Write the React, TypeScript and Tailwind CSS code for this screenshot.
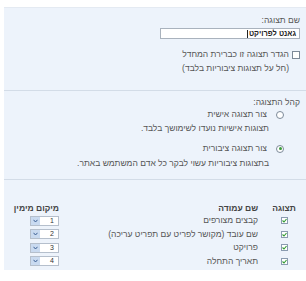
import React from "react";

const rows = [
  { name: "קבצים מצורפים", pos: 1 },
  { name: "שם עובד (מקושר לפריט עם תפריט עריכה)", pos: 2 },
  { name: "פרויקט", pos: 3 },
  { name: "תאריך התחלה", pos: 4 },
];

const Check = () => (
  <span className="flex h-[7px] w-[7px] items-center justify-center border border-[#8a9bb0] bg-white">
    <svg width="5" height="5" viewBox="0 0 5 5">
      <path d="M0.5 2.5 L2 4 L4.5 1" fill="none" stroke="#2e9a2e" strokeWidth="1.1" />
    </svg>
  </span>
);

const Radio = ({ on }: { on?: boolean }) => (
  <span className="flex h-[8px] w-[8px] items-center justify-center rounded-full border border-[#7d8a99] bg-white">
    {on && <span className="h-[3px] w-[3px] rounded-full bg-[#3a9a3a]"></span>}
  </span>
);

const PosSelect = ({ n }: { n: number }) => (
  <div className="flex h-[10px] w-[29px] border border-[#b5bfcc] bg-white" dir="ltr">
    <span className="flex w-[9px] items-center justify-center bg-[#c9daf0]">
      <svg width="5" height="4" viewBox="0 0 5 4">
        <path d="M0.5 0.8 L2.5 3 L4.5 0.8" fill="none" stroke="#3b5f94" strokeWidth="1" />
      </svg>
    </span>
    <span className="flex-1 pr-[4px] text-right text-[7px] leading-[8px] text-[#333]">{n}</span>
  </div>
);

export default function App() {
  return (
    <div
      dir="rtl"
      className="h-[281px] w-[306px] overflow-hidden bg-white pl-[4px] pt-[7px] text-[8.5px] text-[#555]"
      style={{ fontFamily: '"Liberation Sans", Arial, sans-serif' }}
    >
      <div className="h-[263px] border-t border-[#e4eaf2] bg-[#edf3fb]">
        {/* view name */}
        <div className="h-[82px] pr-[6px] pt-[7px]">
          <div className="leading-[11px]">שם תצוגה:</div>
          <div className="mt-[2px] flex h-[11px] w-[140px] items-center border border-[#a9b2bd] bg-white pr-[3px] text-[7.5px] font-bold text-[#222]">
            גאנט לפרויקט<span className="mr-px h-[8px] w-px bg-[#222]"></span>
          </div>
          <div className="mt-[11px] flex items-start gap-[3px]">
            <span className="mt-[1px] h-[8px] w-[8px] border border-[#7d8a99] bg-white"></span>
            <div className="leading-[14px]">
              <div className="-mt-[3px]">הגדר תצוגה זו כברירת המחדל</div>
              <div>(חל על תצוגות ציבוריות בלבד)</div>
            </div>
          </div>
        </div>

        {/* audience */}
        <div className="h-[90px] border-t border-b border-t-[#d3dce7] border-b-[#d3dce7] pr-[6px] pt-[6px]">
          <div className="leading-[11px]">קהל התצוגה:</div>
          <div className="mt-[1px] flex items-center gap-[9px] pr-[16px] leading-[11px]">
            <Radio />
            <span>צור תצוגה אישית</span>
          </div>
          <div className="mr-[31px] mt-[3px] leading-[11px]">תצוגות אישיות נועדו לשימושך בלבד.</div>
          <div className="mt-[9px] flex items-center gap-[9px] pr-[16px] leading-[11px]">
            <Radio on />
            <span>צור תצוגה ציבורית</span>
          </div>
          <div className="mr-[31px] mt-[4px] leading-[11px]">בתצוגות ציבוריות עשוי לבקר כל אדם המשתמש באתר.</div>
        </div>

        {/* columns */}
        <div className="pl-[11px] pr-[7px] pt-[22px]">
          <div className="flex h-[12px] items-center font-bold text-[#444]">
            <span className="w-[30px] text-center">תצוגה</span>
            <span className="mr-[11px] flex-1">שם עמודה</span>
            <span className="w-[44px] whitespace-nowrap text-right">מיקום מימין</span>
          </div>
          {rows.map((r) => (
            <div key={r.pos} className="flex h-[13.5px] items-center">
              <span className="flex w-[30px] justify-center">
                <Check />
              </span>
              <span className="mr-[11px] flex-1">{r.name}</span>
              <span className="flex w-[44px] justify-start">
                <PosSelect n={r.pos} />
              </span>
            </div>
          ))}
        </div>
      </div>
    </div>
  );
}
